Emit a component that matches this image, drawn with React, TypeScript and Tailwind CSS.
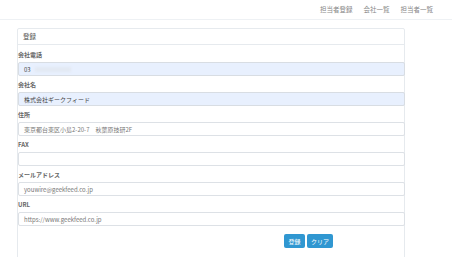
import React from "react";

const font = { fontFamily: '"Noto Sans CJK JP", "Noto Sans", sans-serif' };

type Field = { label: string; value: string; filled?: boolean };

const fields: Field[] = [
  { label: "会社電話", value: "03", filled: true },
  { label: "会社名", value: "株式会社ギークフィード", filled: true },
  { label: "住所", value: "東京都台東区小島2-20-7　秋葉原技研2F" },
  { label: "FAX", value: "" },
  { label: "メールアドレス", value: "youwire@geekfeed.co.jp" },
  { label: "URL", value: "https://www.geekfeed.co.jp" },
];

export default function App() {
  return (
    <div className="h-[257px] w-[452px] overflow-hidden bg-white" style={font}>
      <header className="flex h-[20px] items-center justify-end gap-[11px] border-b border-[#eef1f4] pr-[19px] text-[6.5px] text-[#888]">
        <span>担当者登録</span>
        <span>会社一覧</span>
        <span>担当者一覧</span>
      </header>
      <div className="ml-[17px] mt-[8px] h-[260px] w-[388px] rounded-[2px] border border-[#e6eaee]">
        <div className="flex h-[16px] items-center border-b border-[#e6eaee] px-[5px] text-[6.5px] text-[#555]">
          登録
        </div>
        <form className="flex flex-col pt-[1px]">
          {fields.map((f) => (
            <div key={f.label} className="flex flex-col">
              <label className="flex h-[16px] items-end pb-[3px] text-[6px] font-semibold text-[#666]">
                {f.label}
              </label>
              <div
                className={
                  "flex h-[14px] w-[387px] items-center rounded-[2px] border px-[5px] text-[6px] " +
                  (f.filled
                    ? "border-[#d8dde3] bg-[#e8f0fe] text-[#444]"
                    : "border-[#dde1e6] bg-white text-[#777]")
                }
              >
                {f.label === "会社電話" ? (
                  <span className="flex items-center">
                    03
                    <span className="ml-[4px] inline-block h-[5px] w-[36px] bg-[#e3e9f3] blur-[1px]" />
                  </span>
                ) : (
                  f.value
                )}
              </div>
            </div>
          ))}
          <div className="mt-[8px] flex gap-[2px] pl-[266px]">
            <button
              type="button"
              className="h-[14px] w-[21px] rounded-[2px] bg-[#3097d1] text-[6px] text-white"
            >
              登録
            </button>
            <button
              type="button"
              className="h-[14px] w-[26px] rounded-[2px] bg-[#3097d1] text-[6px] text-white"
            >
              クリア
            </button>
          </div>
        </form>
      </div>
    </div>
  );
}
